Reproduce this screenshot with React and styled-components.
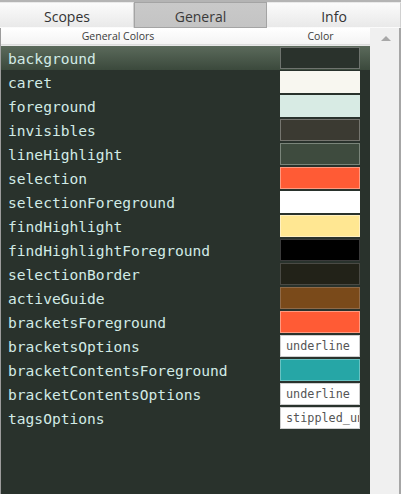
import React from 'react';
import styled, { createGlobalStyle } from 'styled-components';

const GlobalStyle = createGlobalStyle`
  html, body {
    margin: 0;
    padding: 0;
    background: #f0f0f0;
  }
`;

const Page = styled.div`
  width: 401px;
  height: 494px;
  box-sizing: border-box;
  border-top: 2px solid #b4b4b4;
  display: flex;
  flex-direction: column;
  font-family: "Open Sans", "Noto Sans", sans-serif;
  overflow: hidden;
`;

const TabBar = styled.div`
  display: grid;
  grid-template-columns: 134px 133px 1fr;
  height: 26px;
  flex-shrink: 0;
`;

const Tab = styled.div`
  display: flex;
  align-items: center;
  justify-content: center;
  padding-top: 3px;
  font-size: 14px;
  color: ${p => (p.active ? '#3a3a3a' : '#333')};
  box-sizing: border-box;
  border: 1px solid ${p => (p.active ? '#a4a4a4' : 'transparent')};
  border-right: 1px solid ${p => (p.active ? '#a4a4a4' : '#d0d0d0')};
  background: ${p =>
    p.active
      ? 'linear-gradient(#c9c9c9, #c4c4c4)'
      : 'linear-gradient(#fbfbfb, #e9e9e9)'};
`;

const Body = styled.div`
  flex: 1;
  display: flex;
  min-height: 0;
`;

const Main = styled.div`
  flex: 1;
  display: flex;
  flex-direction: column;
  border-left: 1px solid #9c9c9c;
`;

const HeaderRow = styled.div`
  display: grid;
  grid-template-columns: 234px 1fr;
  height: 16px;
  align-items: center;
  font-size: 10.5px;
  color: #3c3c3c;
  background: linear-gradient(#ffffff, #f4f4f4);
  border-bottom: 1px solid #dcdcdc;
  flex-shrink: 0;
`;

const HeaderCell = styled.div`
  text-align: center;
  padding-left: ${p => p.offset || 0}px;
`;

const List = styled.div`
  flex: 1;
  background: #29322c;
  border-top: 1px solid #e8e8e8;
`;

const Row = styled.div`
  display: flex;
  align-items: center;
  height: 24px;
  background: ${p =>
    p.selected ? 'linear-gradient(#5b6a5b, #3b493c)' : 'transparent'};
`;

const Name = styled.div`
  flex: 1;
  padding-left: 7px;
  font-family: "DejaVu Sans Mono", monospace;
  font-size: 14.6px;
  color: #d2ebe6;
  white-space: nowrap;
`;

const Swatch = styled.div`
  width: 80px;
  height: 22px;
  box-sizing: border-box;
  margin-right: 10px;
  background: ${p => p.color};
  border: 1px solid ${p => p.edge || 'rgba(255,255,255,0.25)'};
`;

const OptionBox = styled.div`
  width: 80px;
  height: 22px;
  box-sizing: border-box;
  margin-right: 10px;
  background: #fff;
  border: 1px solid #cfcfcf;
  padding-left: 5px;
  font-family: "DejaVu Sans Mono", monospace;
  font-size: 11.8px;
  line-height: 20px;
  color: #555;
  overflow: hidden;
  white-space: nowrap;
`;

const Scrollbar = styled.div`
  width: 29px;
  background: #f0f0f0;
  border-right: 2px solid #a6a6a6;
  display: flex;
  flex-direction: column;
  align-items: center;
`;

const Arrow = styled.div`
  margin-top: 8px;
  margin-left: 2px;
  width: 0;
  height: 0;
  border-left: 5px solid transparent;
  border-right: 5px solid transparent;
  border-bottom: 5px solid #a8a8a8;
`;

const colors = [
  { name: 'background', color: '#2a322c', edge: '#6e736e', selected: true },
  { name: 'caret', color: '#f8f7f0', edge: '#f8f7f0' },
  { name: 'foreground', color: '#d8ebe4', edge: '#d8ebe4' },
  { name: 'invisibles', color: '#3b3a32', edge: '#75756f' },
  { name: 'lineHighlight', color: '#3e4b3e', edge: '#7a857a' },
  { name: 'selection', color: '#ff5b35', edge: '#ff9a80' },
  { name: 'selectionForeground', color: '#ffffff', edge: '#ffffff' },
  { name: 'findHighlight', color: '#ffe792', edge: '#fff0c0' },
  { name: 'findHighlightForeground', color: '#000000', edge: '#3a3a3a' },
  { name: 'selectionBorder', color: '#222218', edge: '#4a4a44' },
  { name: 'activeGuide', color: '#7a4a1a', edge: '#8f6a48' },
  { name: 'bracketsForeground', color: '#ff5b35', edge: '#ff9a80' },
  { name: 'bracketsOptions', option: 'underline' },
  { name: 'bracketContentsForeground', color: '#26a6a6', edge: '#68c2c2' },
  { name: 'bracketContentsOptions', option: 'underline' },
  { name: 'tagsOptions', option: 'stippled_underline' },
];

export default function App() {
  return (
    <Page>
      <GlobalStyle />
      <TabBar>
        <Tab>Scopes</Tab>
        <Tab active>General</Tab>
        <Tab>Info</Tab>
      </TabBar>
      <Body>
        <Main>
          <HeaderRow>
            <HeaderCell>General Colors</HeaderCell>
            <HeaderCell offset={36}>Color</HeaderCell>
          </HeaderRow>
          <List>
            {colors.map(item => (
              <Row key={item.name} selected={item.selected}>
                <Name>{item.name}</Name>
                {item.option ? (
                  <OptionBox>{item.option}</OptionBox>
                ) : (
                  <Swatch color={item.color} edge={item.edge} />
                )}
              </Row>
            ))}
          </List>
        </Main>
        <Scrollbar>
          <Arrow />
        </Scrollbar>
      </Body>
    </Page>
  );
}
